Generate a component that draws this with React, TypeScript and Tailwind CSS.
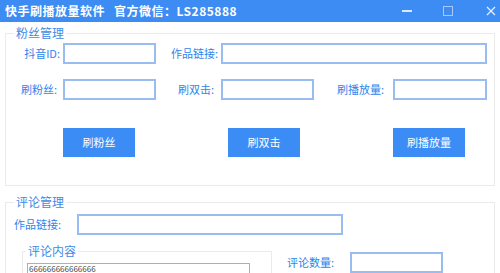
import React from 'react';

const font = { fontFamily: '"Noto Sans CJK SC", "Liberation Sans", sans-serif' };

function Field({ w }: { w: string }) {
  return <input className={`h-[21px] ${w} border-2 border-[#9abdf1] bg-white outline-none`} />;
}

function Label({ text, w }: { text: string; w: string }) {
  return <span className={`${w} shrink-0 text-right text-[11px] leading-[21px] text-[#2f84ec]`}>{text}</span>;
}

function Btn({ text }: { text: string }) {
  return (
    <button className="h-[29px] w-[72px] bg-[#3b8cf5] text-[11px] text-white">{text}</button>
  );
}

export default function App() {
  return (
    <div className="h-[273px] w-[500px] overflow-hidden bg-white" style={font}>
      {/* title bar */}
      <div className="flex h-[22px] items-center bg-[#3d8cf4] pl-[5px] text-white">
        <span className="text-[12px] font-bold tracking-[0.5px]">快手刷播放量软件</span>
        <span className="ml-[9px] text-[12px] font-bold tracking-[0.5px]">官方微信：LS285888</span>
        <div className="ml-auto flex items-center">
          <span className="mr-[31px] h-[2px] w-[10px] bg-[#dce9fd]" />
          <span className="mr-[33px] h-[10px] w-[10px] border border-[#a9c8f7]" />
          <svg className="mr-[4px]" width="10" height="10" viewBox="0 0 10 10">
            <path d="M1 1L9 9M9 1L1 9" stroke="#e3eefd" strokeWidth="1.3" />
          </svg>
        </div>
      </div>

      {/* 粉丝管理 */}
      <fieldset className="mx-[5px] mt-[4px] h-[160px] border border-[#ebebeb] px-0">
        <legend className="ml-[8px] px-[2px] text-[12px] leading-[14px] text-[#3f89e4]">粉丝管理</legend>
        <div className="mt-[3px] flex items-center">
          <Label text="抖音ID:" w="w-[54px]" />
          <span className="w-[3px]" />
          <Field w="w-[93px]" />
          <Label text="作品链接:" w="w-[62px]" />
          <span className="w-[3px]" />
          <Field w="w-[266px]" />
        </div>
        <div className="mt-[15px] flex items-center">
          <Label text="刷粉丝:" w="w-[51px]" />
          <span className="w-[6px]" />
          <Field w="w-[93px]" />
          <Label text="刷双击:" w="w-[58px]" />
          <span className="w-[7px]" />
          <Field w="w-[93px]" />
          <Label text="刷播放量:" w="w-[70px]" />
          <span className="w-[9px]" />
          <Field w="w-[94px]" />
        </div>
        <div className="mt-[28px] flex">
          <span className="w-[57px]" />
          <Btn text="刷粉丝" />
          <span className="w-[93px]" />
          <Btn text="刷双击" />
          <span className="w-[93px]" />
          <Btn text="刷播放量" />
        </div>
      </fieldset>

      {/* 评论管理 */}
      <fieldset className="mx-[5px] mt-[9px] h-[120px] border border-[#ebebeb] px-0">
        <legend className="ml-[8px] px-[2px] text-[12px] leading-[14px] text-[#3f89e4]">评论管理</legend>
        <div className="mt-[5px] flex items-center">
          <Label text="作品链接:" w="w-[55px]" />
          <span className="w-[16px]" />
          <Field w="w-[266px]" />
        </div>
        <div className="mt-[8px] flex items-start">
          <fieldset className="ml-[16px] h-[60px] w-[250px] border border-[#ebebeb] px-0">
            <legend className="ml-[3px] px-[2px] text-[12px] leading-[16px] text-[#3f89e4]">评论内容</legend>
            <div className="ml-[4px] mt-[4px] h-[40px] w-[223px] border border-[#8fb3ea] px-[1px] text-[8px] leading-[9px] text-[#444]">
              666666666666666
            </div>
          </fieldset>
          <div className="ml-[10px] mt-[9px] flex items-center">
            <Label text="评论数量:" w="w-[52px]" />
            <span className="w-[16px]" />
            <Field w="w-[93px]" />
          </div>
        </div>
      </fieldset>
    </div>
  );
}
